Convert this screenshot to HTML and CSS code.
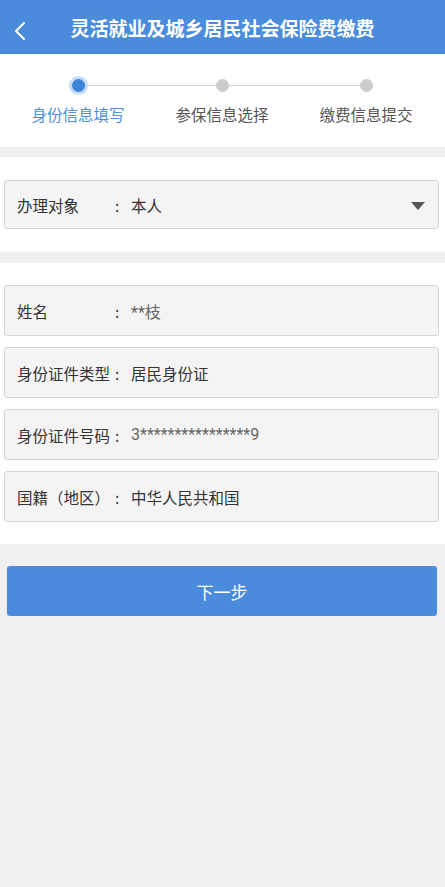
FILE: index.html
```html
<!DOCTYPE html>
<html lang="zh-CN">
<head>
<meta charset="utf-8">
<link rel="stylesheet" href="styles.css">
</head>
<body>
<header class="topbar">
  <svg class="back" width="14" height="20" viewBox="0 0 14 20"><polyline points="11,2 3,10 11,18" fill="none" stroke="#fff" stroke-width="2" stroke-linecap="round" stroke-linejoin="round"/></svg>
  <h1 class="title">灵活就业及城乡居民社会保险费缴费</h1>
</header>

<section class="steps">
  <div class="track">
    <div class="line"></div>
    <div class="step active"><span class="dot"></span><span class="label">身份信息填写</span></div>
    <div class="step"><span class="dot"></span><span class="label">参保信息选择</span></div>
    <div class="step"><span class="dot"></span><span class="label">缴费信息提交</span></div>
  </div>
</section>

<section class="panel panel-one">
  <div class="field">
    <span class="f-label">办理对象</span><span class="colon">:</span><span class="f-value">本人</span>
    <span class="caret"></span>
  </div>
</section>

<section class="panel panel-two">
  <div class="field">
    <span class="f-label">姓名</span><span class="colon">:</span><span class="f-value muted">**枝</span>
  </div>
  <div class="field">
    <span class="f-label">身份证件类型</span><span class="colon">:</span><span class="f-value">居民身份证</span>
  </div>
  <div class="field">
    <span class="f-label">身份证件号码</span><span class="colon">:</span><span class="f-value muted">3****************9</span>
  </div>
  <div class="field">
    <span class="f-label">国籍（地区）</span><span class="colon">:</span><span class="f-value">中华人民共和国</span>
  </div>
</section>

<div class="actions">
  <button class="next">下一步</button>
</div>
</body>
</html>
```

FILE: styles.css
```css
html, body {
  margin: 0;
  padding: 0;
}
body {
  background: #f0f0f0;
  font-family: "Noto Sans CJK SC", "Noto Sans", sans-serif;
  color: #333;
  min-height: 887px;
}
.topbar {
  height: 54px;
  background: #4a8bdc;
  display: flex;
  align-items: center;
  justify-content: center;
  position: relative;
}
.back {
  position: absolute;
  left: 13px;
  top: 21px;
}
.title {
  margin: 0;
  color: #fff;
  font-size: 19px;
  font-weight: 700;
  letter-spacing: 0;
  line-height: 1;
}
.steps {
  background: #fff;
  height: 93px;
  margin-bottom: 10px;
}
.track {
  position: relative;
  display: flex;
  justify-content: space-between;
  padding: 20px 0 0;
  width: 432px;
  margin-left: 6px;
}
.line {
  position: absolute;
  left: 72px;
  right: 72px;
  top: 31px;
  height: 1px;
  background: #d2d2d2;
}
.step {
  width: 144px;
  display: flex;
  flex-direction: column;
  align-items: center;
  position: relative;
}
.dot {
  width: 13px;
  height: 13px;
  border-radius: 50%;
  background: #cccccc;
  margin-top: 5px;
}
.step.active .dot {
  background: #3b84d8;
  box-shadow: 0 0 0 3px #c6dcf4;
}
.label {
  margin-top: 12px;
  font-size: 15.5px;
  color: #555;
  line-height: 20px;
}
.step.active .label {
  color: #4f90da;
}
.panel {
  background: #fff;
  padding: 23px 6px 23px 4px;
  display: flex;
  flex-direction: column;
  gap: 11px;
  margin-bottom: 11px;
}
.panel-two {
  padding: 22px 6px 22px 4px;
  margin-bottom: 0;
}
.field {
  position: relative;
  height: 49px;
  box-sizing: border-box;
  border: 1px solid #d6d6d6;
  border-radius: 3px;
  background: #f4f4f4;
  display: flex;
  align-items: center;
  padding-left: 12px;
  font-size: 15.5px;
}
.panel-two .field {
  height: 51px;
}
.f-label {
  width: 98px;
  color: #333;
  white-space: nowrap;
}
.colon {
  width: 16px;
  color: #444;
}
.f-value {
  color: #333;
}
.f-value.muted {
  color: #666;
  font-family: Roboto, "Noto Sans CJK SC", sans-serif;
  font-size: 16px;
}
.caret {
  position: absolute;
  right: 13px;
  top: 21px;
  width: 0;
  height: 0;
  border-left: 7px solid transparent;
  border-right: 7px solid transparent;
  border-top: 8px solid #555;
}
.actions {
  padding: 22px 8px 0 7px;
}
.next {
  display: block;
  width: 100%;
  height: 50px;
  border: none;
  border-radius: 3px;
  background: #4a8bdc;
  color: #fff;
  font-family: "Noto Sans CJK SC", "Noto Sans", sans-serif;
  font-size: 17px;
}
```
